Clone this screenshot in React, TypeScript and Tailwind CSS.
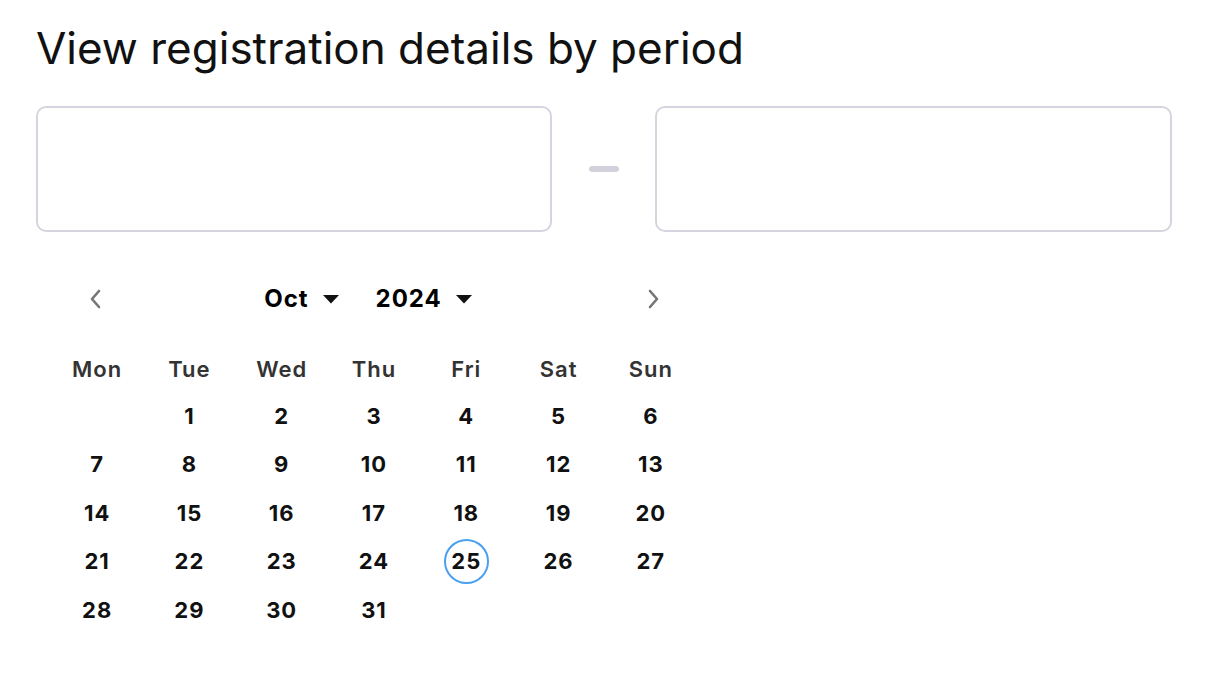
const days = ['Mon', 'Tue', 'Wed', 'Thu', 'Fri', 'Sat', 'Sun']

// Oct 2024 starts on a Tuesday
const cells: (number | null)[] = [null, ...Array.from({ length: 31 }, (_, i) => i + 1)]
const today = 25

function Chevron({ dir }: { dir: 'left' | 'right' }) {
  return (
    <svg width="14" height="22" viewBox="0 0 14 22" fill="none">
      <path
        d={dir === 'left' ? 'M11 3L4 11L11 19' : 'M3 3L10 11L3 19'}
        stroke="#767676"
        strokeWidth="2.6"
        strokeLinecap="round"
        strokeLinejoin="round"
      />
    </svg>
  )
}

function Caret() {
  return (
    <svg width="18" height="10" viewBox="0 0 18 10">
      <path d="M1 1H17L9 9.5Z" fill="#111" />
    </svg>
  )
}

export default function App() {
  return (
    <div className="w-[1216px] h-[682px] bg-white font-['Inter',sans-serif] text-black overflow-hidden">
      <div className="pl-[36px] pr-[44px] pt-[21px]">
        <h1 className="text-[44px] leading-[54px] font-normal text-[#111]">
          View registration details by period
        </h1>

        <div className="flex items-center mt-[31px]">
          <div className="w-[516px] h-[126px] rounded-[10px] border-2 border-[#d6d5df]" />
          <div className="flex-1 flex justify-center">
            <div className="w-[30px] h-[6px] rounded-full bg-[#d3d2dc]" />
          </div>
          <div className="w-[517px] h-[126px] rounded-[10px] border-2 border-[#d6d5df]" />
        </div>

        <div className="w-[646px] ml-[15px] mt-[45px]">
          <div className="flex items-center justify-between h-[44px] pl-[37px] pr-[36px]">
            <Chevron dir="left" />
            <div className="flex items-center gap-[36px] text-[24px] font-bold tracking-[1px] mr-[12px]">
              <div className="flex items-center gap-[13px]">
                Oct <Caret />
              </div>
              <div className="flex items-center gap-[13px]">
                2024 <Caret />
              </div>
            </div>
            <Chevron dir="right" />
          </div>

          <div className="grid grid-cols-7 mt-[28px]">
            {days.map((d) => (
              <div
                key={d}
                className="h-[40px] flex items-center justify-center text-[22px] font-semibold text-[#333] tracking-[1px]"
              >
                {d}
              </div>
            ))}
          </div>

          <div className="grid grid-cols-7 mt-[3px]">
            {cells.map((n, i) => (
              <div key={i} className="h-[48.5px] flex items-center justify-center">
                {n !== null && (
                  <span
                    className={
                      n === today
                        ? 'w-[45px] h-[45px] rounded-full border-2 border-[#4aa0f0] flex items-center justify-center text-[22px] font-bold text-[#111] tracking-[1px]'
                        : 'text-[22px] font-bold text-[#111] tracking-[1px]'
                    }
                  >
                    {n}
                  </span>
                )}
              </div>
            ))}
          </div>
        </div>
      </div>
    </div>
  )
}
